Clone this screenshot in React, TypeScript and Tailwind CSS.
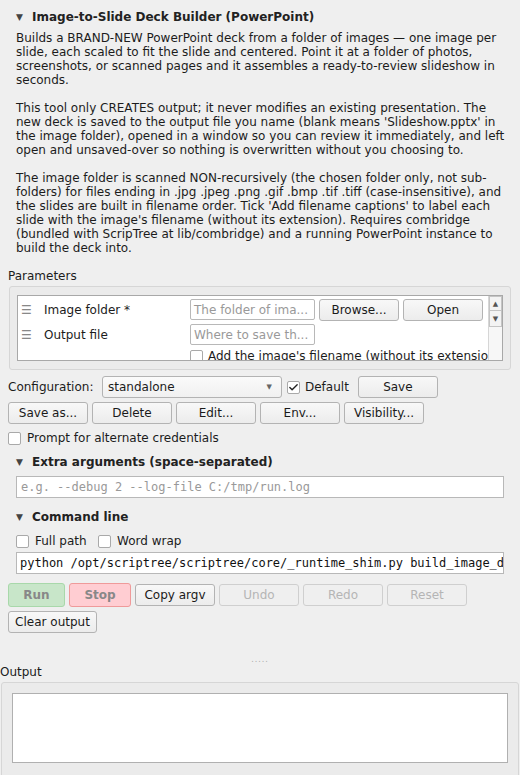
import { Check } from "lucide-react";

const sans = "font-['DejaVu_Sans',sans-serif]";
const mono = "font-['DejaVu_Sans_Mono',monospace]";

function Btn({ label, w = "w-[80px]", disabled = false }: { label: string; w?: string; disabled?: boolean }) {
  return (
    <div
      className={`${w} flex h-[22px] shrink-0 items-center justify-center rounded-[3px] border text-[12px] ${
        disabled
          ? "border-[#cfcfcf] bg-[#efefef] text-[#b5b5b5]"
          : "border-[#b3b3b3] bg-gradient-to-b from-[#f8f8f8] to-[#ececec] text-[#1a1a1a]"
      }`}
    >
      {label}
    </div>
  );
}

function Box({ checked = false }: { checked?: boolean }) {
  return (
    <div className="flex h-[13px] w-[13px] shrink-0 items-center justify-center rounded-[2px] border border-[#a9a9a9] bg-white">
      {checked && <Check size={11} strokeWidth={3} className="text-[#222]" />}
    </div>
  );
}

function Section({ title }: { title: string }) {
  return (
    <div className="flex h-[14px] items-center text-[12px] font-bold leading-[14px] text-[#222]">
      <span className="ml-[16px] w-[16px] text-[9px] text-[#444]">▼</span>
      {title}
    </div>
  );
}

export default function App() {
  return (
    <div className={`${sans} h-[775px] w-[520px] overflow-hidden bg-[#efefef] text-[12px] leading-[14px] text-[#1c1c1c]`}>
      <div className="pt-[10px]">
        <Section title="Image-to-Slide Deck Builder (PowerPoint)" />
        <div className="mt-[7px] pl-[16px] pr-[10px]">
          <p>
            Builds a BRAND-NEW PowerPoint deck from a folder of images — one image per slide, each scaled to fit the
            slide and centered. Point it at a folder of photos, screenshots, or scanned pages and it assembles a
            ready-to-review slideshow in seconds.
          </p>
          <p className="mt-[14px]">
            This tool only CREATES output; it never modifies an existing presentation. The new deck is saved to the
            output file you name (blank means 'Slideshow.pptx' in the image folder), opened in a window so you can
            review it immediately, and left open and unsaved-over so nothing is overwritten without you choosing to.
          </p>
          <p className="mt-[14px]">
            The image folder is scanned NON-recursively (the chosen folder only, not sub-folders) for files ending in
            .jpg .jpeg .png .gif .bmp .tif .tiff (case-insensitive), and the slides are built in filename order. Tick
            'Add filename captions' to label each slide with the image's filename (without its extension). Requires
            combridge (bundled with ScripTree at lib/combridge) and a running PowerPoint instance to build the deck
            into.
          </p>
        </div>
      </div>

      <div className="mt-[14px] pl-[8px]">Parameters</div>
      <div className="ml-[9px] mr-[9px] mt-[3px] rounded-[3px] border border-[#d6d6d6] bg-[#ebebeb] px-[7px] py-[8px]">
        <div className="flex h-[66px] overflow-hidden border border-[#a8a8a8] bg-white">
          <div className="flex-1 overflow-hidden">
            <div className="flex h-[26px] items-center pt-[1px]">
              <span className="w-[26px] pl-[3px] text-[#888]">☰</span>
              <span className="w-[146px]">Image folder *</span>
              <div className="flex h-[21px] w-[125px] items-center overflow-hidden whitespace-nowrap rounded-[2px] border border-[#b8b8b8] px-[3px] text-[#999]">
                The folder of ima...
              </div>
              <div className="ml-[4px] flex gap-[4px]">
                <Btn label="Browse..." />
                <Btn label="Open" />
              </div>
            </div>
            <div className="flex h-[25px] items-center">
              <span className="w-[26px] pl-[3px] text-[#888]">☰</span>
              <span className="w-[146px]">Output file</span>
              <div className="flex h-[21px] w-[125px] items-center overflow-hidden whitespace-nowrap rounded-[2px] border border-[#b8b8b8] px-[3px] text-[#999]">
                Where to save th...
              </div>
            </div>
            <div className="flex items-center gap-[5px] whitespace-nowrap pl-[172px] pt-[2px]">
              <Box />
              <span>Add the image's filename (without its extension)</span>
            </div>
          </div>
          <div className="w-[14px] shrink-0 border-l border-[#d6d6d6] bg-[#f7f7f7]">
            <div className="flex h-[15px] items-center justify-center border border-[#c4c4c4] bg-[#f3f3f3] text-[7px] text-[#555]">▲</div>
            <div className="flex h-[16px] items-center justify-center border border-t-0 border-[#c4c4c4] bg-[#f3f3f3] text-[7px] text-[#555]">▼</div>
          </div>
        </div>
      </div>

      <div className="mt-[6px] flex h-[22px] items-center pl-[8px]">
        <span className="w-[94px]">Configuration:</span>
        <div className="flex h-[22px] w-[180px] items-center justify-between rounded-[3px] border border-[#b3b3b3] bg-gradient-to-b from-[#fafafa] to-[#f0f0f0] pl-[5px] pr-[9px]">
          <span>standalone</span>
          <span className="text-[7px] text-[#666]">▼</span>
        </div>
        <div className="ml-[5px] flex items-center gap-[5px]">
          <Box checked />
          <span>Default</span>
        </div>
        <div className="ml-[9px]">
          <Btn label="Save" />
        </div>
      </div>

      <div className="mt-[4px] flex gap-[4px] pl-[8px]">
        <Btn label="Save as..." />
        <Btn label="Delete" />
        <Btn label="Edit..." />
        <Btn label="Env..." />
        <Btn label="Visibility..." />
      </div>

      <div className="mt-[7px] flex items-center gap-[6px] pl-[8px]">
        <Box />
        <span>Prompt for alternate credentials</span>
      </div>

      <div className="mt-[10px]">
        <Section title="Extra arguments (space-separated)" />
      </div>
      <div className={`${mono} mx-[16px] mt-[7px] flex h-[22px] w-[488px] items-center border border-[#b8b8b8] bg-white px-[4px] text-[#999]`}>
        e.g. --debug 2 --log-file C:/tmp/run.log
      </div>

      <div className="mt-[12px]">
        <Section title="Command line" />
      </div>
      <div className="mt-[10px] flex items-center pl-[16px]">
        <Box />
        <span className="ml-[6px] w-[63px]">Full path</span>
        <Box />
        <span className="ml-[6px]">Word wrap</span>
      </div>
      <div className={`${mono} mx-[16px] mt-[4px] flex h-[22px] w-[488px] items-center overflow-hidden whitespace-nowrap border border-[#b8b8b8] bg-white px-[3px] text-[#111]`}>
        python /opt/scriptree/scriptree/core/_runtime_shim.py build_image_deck
      </div>

      <div className="mt-[9px] flex items-center gap-[4px] pl-[8px]">
        <div className="flex h-[24px] w-[57px] items-center justify-center rounded-[3px] border border-[#a8d8aa] bg-[#c8e6c9] font-bold text-[#888]">
          Run
        </div>
        <div className="flex h-[24px] w-[62px] items-center justify-center rounded-[3px] border border-[#ef9a9a] bg-[#ffcdd2] font-bold text-[#888]">
          Stop
        </div>
        <Btn label="Copy argv" />
        <Btn label="Undo" disabled />
        <Btn label="Redo" disabled />
        <Btn label="Reset" disabled />
      </div>
      <div className="mt-[4px] pl-[8px]">
        <Btn label="Clear output" w="w-[89px]" />
      </div>

      <div className="mt-[23px] flex justify-center">
        <span className="text-[8px] leading-[8px] tracking-[1px] text-[#aaa]">.....</span>
      </div>

      <div className="mt-[1px]">Output</div>
      <div className="ml-[1px] mr-[1px] mt-[3px] h-[100px] rounded-[3px] border border-[#d6d6d6] bg-[#ebebeb] px-[10px] pt-[10px]">
        <div className="h-[70px] border border-[#b0b0b0] bg-white" />
      </div>
    </div>
  );
}
